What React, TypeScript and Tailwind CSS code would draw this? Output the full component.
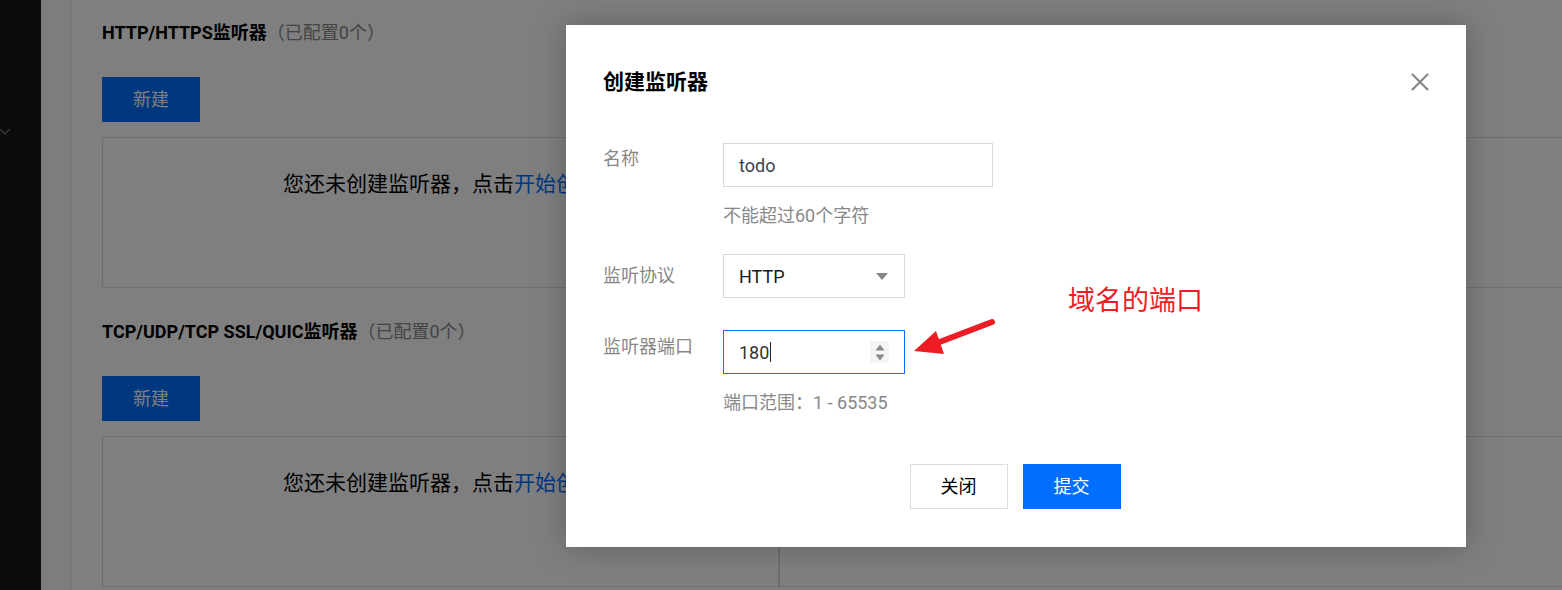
const font = {
  fontFamily: 'Roboto, "Noto Sans CJK SC", "Liberation Sans", sans-serif',
};

function ListenerSection({ title }: { title: string }) {
  return (
    <section className="flex flex-col">
      <h2 className="text-[18px] leading-[26px] font-bold text-black">
        {title}
        <span className="font-normal text-[#888888]">（已配置0个）</span>
      </h2>
      <button className="mt-[31px] h-[45px] w-[98px] bg-[#006eff] text-[18px] text-white">
        新建
      </button>
      <div className="mt-[15px] flex">
        <div className="h-[151px] w-[677px] shrink-0 border border-[#dddddd] pt-[31px] text-center text-[21px] leading-[30px] text-black">
          您还未创建监听器，点击<span className="text-[#006eff]">开始创建</span>
        </div>
        <div className="h-[151px] w-[900px] shrink-0 border border-[#dddddd]" />
      </div>
    </section>
  );
}

function CloseIcon() {
  return (
    <svg width="20" height="20" viewBox="0 0 20 20" fill="none">
      <path d="M2 2 L18 18 M18 2 L2 18" stroke="#888888" strokeWidth="2.2" />
    </svg>
  );
}

function Spinner() {
  return (
    <div className="flex h-[22px] w-[19px] flex-col items-center justify-center gap-[3px] bg-[#f4f4f4]">
      <svg width="10" height="7" viewBox="0 0 10 7">
        <path d="M5 0.5 L9.5 6.5 L0.5 6.5 Z" fill="#8a8a8a" />
      </svg>
      <svg width="10" height="7" viewBox="0 0 10 7">
        <path d="M0.5 0.5 L9.5 0.5 L5 6.5 Z" fill="#8a8a8a" />
      </svg>
    </div>
  );
}

export default function App() {
  return (
    <div
      className="relative h-[590px] w-[1562px] overflow-hidden bg-white"
      style={font}
    >
      <div className="flex h-full">
        <aside className="relative w-[41px] shrink-0 bg-[#181818]">
          <svg
            className="absolute left-0 top-[127px]"
            width="12"
            height="10"
            viewBox="0 0 12 10"
          >
            <path d="M0 2 L5 7 L10 2" stroke="#6a6a6a" strokeWidth="1.5" fill="none" />
          </svg>
        </aside>
        <div className="w-[31px] shrink-0 border-r border-[#efefef] bg-[#fbfbfb]" />
        <main className="flex flex-col gap-[31px] pl-[30px] pt-[20px]">
          <ListenerSection title="HTTP/HTTPS监听器" />
          <ListenerSection title="TCP/UDP/TCP SSL/QUIC监听器" />
        </main>
      </div>

      <div className="absolute inset-0 bg-black/50" />

      <div className="absolute left-[566px] top-[25px] flex h-[522px] w-[900px] flex-col bg-white px-[37px] pt-[43px] shadow-[0_0_30px_rgba(0,0,0,0.25)]">
        <div className="flex items-center justify-between">
          <h1 className="text-[21px] leading-[28px] font-bold text-black">
            创建监听器
          </h1>
          <button className="mr-[-1px]">
            <CloseIcon />
          </button>
        </div>

        <div className="mt-[47px] flex">
          <div className="w-[120px] pt-[2px] text-[18px] leading-[28px] text-[#888888]">
            名称
          </div>
          <div className="flex flex-col">
            <div className="flex h-[44px] w-[270px] items-center border border-[#d9d9d9] px-[15px] text-[18px] text-[#3b4252]">
              todo
            </div>
            <div className="mt-[15px] text-[18px] leading-[28px] text-[#888888]">
              不能超过60个字符
            </div>
          </div>
        </div>

        <div className="mt-[24px] flex items-center">
          <div className="w-[120px] text-[18px] leading-[28px] text-[#888888]">
            监听协议
          </div>
          <div className="flex h-[44px] w-[182px] items-center justify-between border border-[#d9d9d9] pl-[15px] pr-[16px] text-[18px] text-[#1a1a1a]">
            HTTP
            <svg width="12" height="7" viewBox="0 0 12 7">
              <path d="M0 0 L12 0 L6 7 Z" fill="#888888" />
            </svg>
          </div>
        </div>

        <div className="mt-[32px] flex">
          <div className="w-[120px] pt-[3px] text-[18px] leading-[28px] text-[#888888]">
            监听器端口
          </div>
          <div className="flex flex-col">
            <div className="flex h-[44px] w-[182px] items-center justify-between border border-[#006eff] pl-[15px] pr-[15px] text-[18px] text-[#333333]">
              <span className="flex items-center">
                180
                <span className="ml-[1px] h-[20px] w-[1px] bg-[#222222]" />
              </span>
              <Spinner />
            </div>
            <div className="mt-[15px] text-[18px] leading-[28px] text-[#888888]">
              端口范围：1 - 65535
            </div>
          </div>
        </div>

        <div className="mt-[47px] flex justify-center gap-[15px] pr-[2px]">
          <button className="h-[45px] w-[98px] border border-[#dddddd] bg-white text-[18px] text-black">
            关闭
          </button>
          <button className="h-[45px] w-[98px] bg-[#006eff] text-[18px] text-white">
            提交
          </button>
        </div>
      </div>

      <svg
        className="absolute left-[905px] top-[312px]"
        width="95"
        height="48"
        viewBox="0 0 95 48"
      >
        <path d="M87 10 L32 31" stroke="#ee1d25" strokeWidth="6" strokeLinecap="round" />
        <path d="M9 39 L31 19 L39 42 Z" fill="#ee1d25" />
      </svg>
      <div className="absolute left-[1068px] top-[284px] text-[27px] leading-[34px] text-[#ee1d25]">
        域名的端口
      </div>
    </div>
  );
}
